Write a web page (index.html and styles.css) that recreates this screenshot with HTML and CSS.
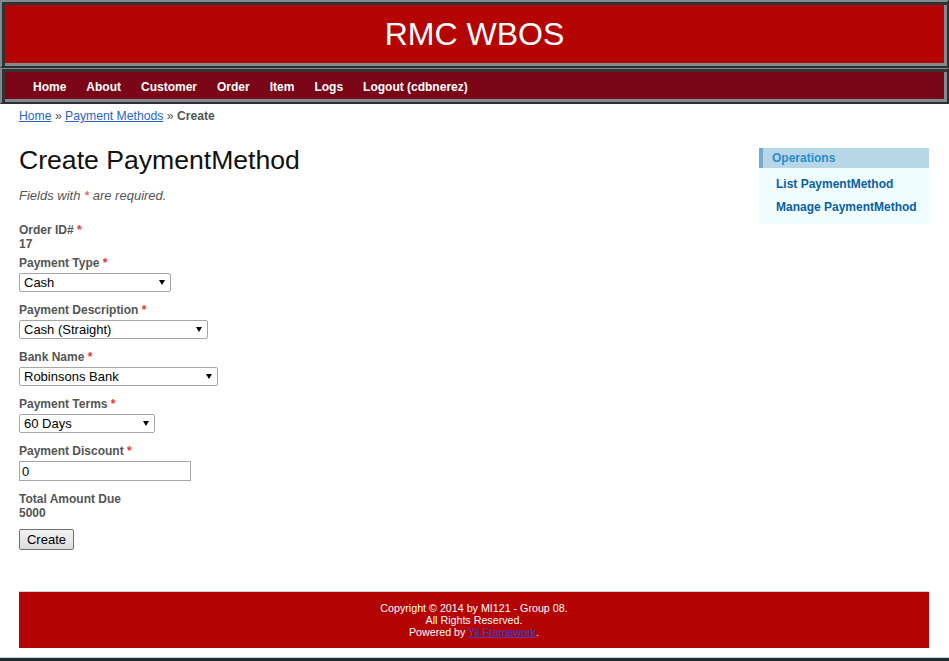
FILE: index.html
```html
<!DOCTYPE html>
<html lang="en">
<head>
<meta charset="utf-8">
<title>RMC WBOS - Create PaymentMethod</title>
<link rel="stylesheet" href="styles.css">
</head>
<body>
<div class="page">
  <div class="header">
    <div class="logo">RMC WBOS</div>
  </div>
  <div class="mainmenu">
    <ul class="menu">
      <li><a href="#">Home</a></li>
      <li><a href="#">About</a></li>
      <li><a href="#">Customer</a></li>
      <li><a href="#">Order</a></li>
      <li><a href="#">Item</a></li>
      <li><a href="#">Logs</a></li>
      <li><a href="#">Logout (cdbnerez)</a></li>
    </ul>
  </div>
  <div class="container">
    <div class="breadcrumbs">
      <a href="#">Home</a> &raquo; <a href="#">Payment Methods</a> &raquo; <span class="current">Create</span>
    </div>
    <div class="columns">
      <div class="content">
        <h1 class="title">Create PaymentMethod</h1>
        <p class="note">Fields with <span class="required">*</span> are required.</p>
        <form class="form">
          <div class="row info-row">
            <div class="label">Order ID# <span class="required">*</span></div>
            <div class="value">17</div>
          </div>
          <div class="row">
            <label class="label">Payment Type <span class="required">*</span></label>
            <span class="select-wrap w-type"><select class="select"><option>Cash</option><option>Check</option></select><span class="arrow"></span></span>
          </div>
          <div class="row">
            <label class="label">Payment Description <span class="required">*</span></label>
            <span class="select-wrap w-desc"><select class="select"><option>Cash (Straight)</option></select><span class="arrow"></span></span>
          </div>
          <div class="row">
            <label class="label">Bank Name <span class="required">*</span></label>
            <span class="select-wrap w-bank"><select class="select"><option>Robinsons Bank</option></select><span class="arrow"></span></span>
          </div>
          <div class="row">
            <label class="label">Payment Terms <span class="required">*</span></label>
            <span class="select-wrap w-terms"><select class="select"><option>60 Days</option></select><span class="arrow"></span></span>
          </div>
          <div class="row">
            <label class="label">Payment Discount <span class="required">*</span></label>
            <input class="text-input" type="text" value="0">
          </div>
          <div class="row info-row total-row">
            <div class="label">Total Amount Due</div>
            <div class="value">5000</div>
          </div>
          <div class="buttons">
            <button type="button" class="button">Create</button>
          </div>
        </form>
      </div>
      <div class="sidebar">
        <div class="portlet">
          <div class="portlet-decoration">
            <div class="portlet-title">Operations</div>
          </div>
          <ul class="operations">
            <li><a href="#">List PaymentMethod</a></li>
            <li><a href="#">Manage PaymentMethod</a></li>
          </ul>
        </div>
      </div>
    </div>
    <div class="footer">
      Copyright &copy; 2014 by MI121 - Group 08.<br>
      All Rights Reserved.<br>
      Powered by <a href="#">Yii Framework</a>.
    </div>
  </div>
  <div class="bottom-bar"></div>
</div>
</body>
</html>
```

FILE: styles.css
```css
* {
  box-sizing: content-box;
}

html, body {
  margin: 0;
  padding: 0;
  background: #fff;
}

body {
  font-family: "Liberation Sans", Arial, sans-serif;
  font-size: 13px;
  color: #555;
  height: 661px;
  overflow: hidden;
}

.page {
  width: 949px;
}

.header {
  height: 64px;
  border: 2px solid;
  border-color: #7f8b8e #2e2e2e #2e2e2e #7f8b8e;
  box-shadow: inset 3px 3px 0 #333, inset -3px -3px 0 #7f8b8e;
  background: #b40404;
  display: flex;
  align-items: center;
  justify-content: center;
}

.logo {
  color: #fff;
  font-size: 32px;
  line-height: 36px;
}

.mainmenu {
  height: 22px;
  padding: 11px 0 0 23px;
  border-style: solid;
  border-width: 1px 2px 2px 2px;
  border-color: #7f8b8e #2e2e2e #2e2e2e #7f8b8e;
  box-shadow: inset 3px 3px 0 #333, inset -3px -3px 0 #7f8b8e;
  background: #7b0618;
}

.menu {
  list-style: none;
  margin: 0;
  padding: 0;
  display: flex;
  gap: 4px;
}

.menu a {
  display: block;
  padding: 0 8px;
  color: #fff;
  font-size: 12px;
  font-weight: bold;
  line-height: 14px;
  text-decoration: none;
}

.container {
  padding: 0 20px 0 19px;
}

.breadcrumbs {
  padding: 5px 0 3px 0;
  font-size: 12.2px;
  line-height: 14px;
  color: #555;
}

.breadcrumbs a {
  color: #2d63c8;
}

.breadcrumbs .current {
  font-weight: bold;
  color: #555;
}

.columns {
  display: flex;
  align-items: flex-start;
}

.content {
  flex: 1;
}

.title {
  margin: 18px 0 0 0;
  font-size: 26.6px;
  line-height: 32px;
  font-weight: normal;
  color: #111;
}

.note {
  margin: 12px 0 0 0;
  font-style: italic;
  font-size: 13px;
  line-height: 15px;
  color: #555;
}

.required {
  color: #e33;
}

.form {
  margin-top: 20px;
}

.row {
  margin: 0 0 11px 0;
}

.row .label {
  display: block;
  font-size: 12px;
  font-weight: bold;
  line-height: 14px;
  margin-bottom: 3px;
  color: #555;
}

.info-row {
  margin-bottom: 5px;
}

.info-row .label {
  margin-bottom: 0;
}

.total-row {
  margin-bottom: 9px;
}

.value {
  font-size: 12px;
  font-weight: bold;
  line-height: 14px;
  color: #555;
}

.select-wrap {
  position: relative;
  display: block;
  height: 19px;
}

.w-type { width: 152px; }
.w-desc { width: 189px; }
.w-bank { width: 199px; }
.w-terms { width: 136px; }

.select {
  appearance: none;
  -webkit-appearance: none;
  display: block;
  box-sizing: border-box;
  width: 100%;
  height: 19px;
  margin: 0;
  padding: 0 0 0 4px;
  border: 1px solid #a6a6a6;
  border-radius: 2px;
  background: #fff;
  color: #000;
  font-family: "Liberation Sans", Arial, sans-serif;
  font-size: 13px;
  line-height: 17px;
}

.arrow {
  position: absolute;
  right: 6px;
  top: 7px;
  width: 0;
  height: 0;
  border-left: 3px solid transparent;
  border-right: 3px solid transparent;
  border-top: 5px solid #000;
  pointer-events: none;
}

.text-input {
  display: block;
  box-sizing: border-box;
  width: 172px;
  height: 20px;
  margin: 0;
  padding: 0 2px;
  border: 1px solid #a6a6a6;
  background: #fff;
  color: #000;
  font-family: "Liberation Sans", Arial, sans-serif;
  font-size: 13px;
}

.buttons {
  margin: 0;
}

.button {
  display: block;
  box-sizing: border-box;
  width: 55px;
  height: 21px;
  margin: 0;
  padding: 0;
  border: 1px solid #707070;
  border-radius: 2px;
  background: linear-gradient(#f2f2f2, #dddddd);
  color: #000;
  font-family: "Liberation Sans", Arial, sans-serif;
  font-size: 13px;
}

.sidebar {
  width: 170px;
  margin-top: 22px;
}

.portlet-decoration {
  height: 13.5px;
  padding: 3px 8px 3px 9px;
  border-left: 4px solid #6faccf;
  background: #b7d6e7;
}

.portlet-title {
  font-size: 12px;
  font-weight: bold;
  line-height: 14px;
  color: #298dcd;
}

.operations {
  list-style: none;
  margin: 0;
  padding: 5px 8px;
  background: #effdff;
}

.operations a {
  display: block;
  padding: 4px 0 4px 9px;
  font-size: 12px;
  font-weight: bold;
  line-height: 15px;
  color: #0a5fa2;
  text-decoration: none;
}

.footer {
  margin-top: 41px;
  padding: 10px;
  border-top: 1px solid #c9d6de;
  background: #b40404;
  color: #fff;
  text-align: center;
  font-size: 10.7px;
  line-height: 12px;
}

.footer a {
  color: #3c3cd8;
}

.bottom-bar {
  margin-top: 9px;
  height: 4px;
  border-top: 1px solid #c3d0d7;
  background: #1f2a31;
}
```
